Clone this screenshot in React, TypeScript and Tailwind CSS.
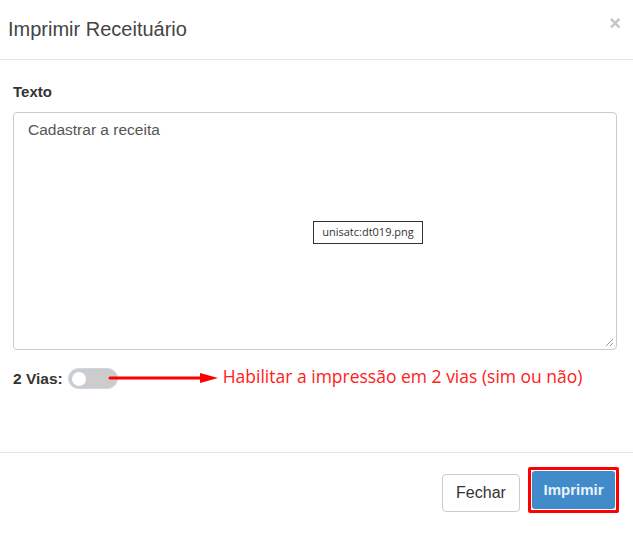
import React from "react";

export default function App() {
  return (
    <div className="relative w-[633px] h-[533px] bg-white overflow-hidden" style={{ fontFamily: '"Liberation Sans", Arial, sans-serif' }}>
      {/* Header */}
      <div className="h-[60px] border-b border-[#e5e5e5] flex items-center justify-between pl-[8px] pr-[12px]">
        <h4 className="text-[20px] text-[#444] leading-none pb-[1px]">Imprimir Receituário</h4>
        <span className="text-[20px] font-bold text-[#c4c4c4] leading-none pb-[14px]">×</span>
      </div>
      {/* Body */}
      <div className="pl-[13px] pr-[16px] pt-[23px] h-[393px] border-b border-[#e5e5e5]">
        <label className="block text-[15px] font-bold text-[#333] leading-[17px]">Texto</label>
        <div className="mt-[12px] h-[238px] w-[604px] border border-[#ccc] rounded-[4px] relative">
          <div className="pl-[14px] pt-[7px] text-[15.5px] text-[#555] leading-[19px]">Cadastrar a receita</div>
          <svg className="absolute right-[2px] bottom-[2px]" width="10" height="10" viewBox="0 0 10 10">
            <line x1="9" y1="2" x2="2" y2="9" stroke="#999" strokeWidth="1" />
            <line x1="9" y1="6" x2="6" y2="9" stroke="#999" strokeWidth="1" />
          </svg>
        </div>
        <div className="mt-[18px] flex items-center">
          <span className="text-[15.5px] font-bold text-[#333] leading-none">2 Vias:</span>
          <div className="ml-[5px] w-[50px] h-[21px] rounded-full bg-[#cccccc] border border-[#c5d9ea] flex items-center pl-[3px]">
            <div className="w-[14px] h-[14px] rounded-full bg-white" />
          </div>
          <span className="ml-[105px] text-[17.5px] text-[#ff2020] leading-none -mt-[4px]" style={{ fontFamily: '"Open Sans", "Noto Sans", sans-serif' }}>
            Habilitar a impressão em 2 vias (sim ou não)
          </span>
        </div>
      </div>
      {/* Footer */}
      <div className="flex justify-end items-start pt-[21px] pr-[14px]">
        <button className="w-[78px] h-[38px] border border-[#ccc] rounded-[4px] bg-white text-[16px] text-[#333]">Fechar</button>
        <div className="ml-[8px] -mt-[7px] border-[3px] border-[#ff0000] rounded-[2px] p-[1px]">
          <button className="w-[83px] h-[38px] rounded-[3px] bg-[#428bca] text-[15px] font-bold text-[#e8f2fb]">Imprimir</button>
        </div>
      </div>
      {/* Arrow annotation */}
      <svg className="absolute left-[108px] top-[371px]" width="112" height="14" viewBox="0 0 112 14">
        <line x1="2" y1="7" x2="95" y2="7" stroke="#ff0000" strokeWidth="3" strokeLinecap="round" />
        <polygon points="92,2 110,7 92,12" fill="#ff0000" />
      </svg>
      {/* Filename tooltip overlay */}
      <div className="absolute left-[313px] top-[221px] w-[110px] h-[23px] border border-[#333] bg-white flex items-center justify-center text-[11px] text-[#333]" style={{ fontFamily: '"Open Sans", "Noto Sans", sans-serif' }}>
        unisatc:dt019.png
      </div>
    </div>
  );
}
